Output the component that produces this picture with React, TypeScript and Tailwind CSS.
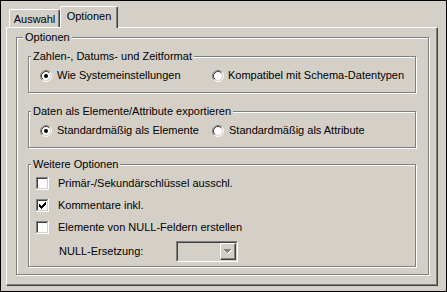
import React from 'react';

function Radio({ checked }: { checked?: boolean }) {
  return (
    <svg width="12" height="12" viewBox="0 0 12 12" className="shrink-0">
      <circle cx="6" cy="6" r="4.5" fill="#fff" />
      <path d="M2.11 9.89 A5.5 5.5 0 0 1 9.89 2.11" fill="none" stroke="#808080" />
      <path d="M9.89 2.11 A5.5 5.5 0 0 1 2.11 9.89" fill="none" stroke="#fff" />
      <path d="M2.82 9.18 A4.5 4.5 0 0 1 9.18 2.82" fill="none" stroke="#404040" />
      <path d="M9.18 2.82 A4.5 4.5 0 0 1 2.82 9.18" fill="none" stroke="#d4d0c8" />
      {checked && <circle cx="6" cy="6" r="2" fill="#000" />}
    </svg>
  );
}

function Checkbox({ checked }: { checked?: boolean }) {
  const cols = [2, 3, 4, 3, 2, 1, 0];
  return (
    <svg width="13" height="13" viewBox="0 0 13 13" shapeRendering="crispEdges" className="shrink-0">
      <rect x="0" y="0" width="13" height="13" fill="#fff" />
      <rect x="0" y="0" width="12" height="1" fill="#808080" />
      <rect x="0" y="0" width="1" height="12" fill="#808080" />
      <rect x="1" y="1" width="10" height="1" fill="#404040" />
      <rect x="1" y="1" width="1" height="10" fill="#404040" />
      <rect x="1" y="11" width="11" height="1" fill="#d4d0c8" />
      <rect x="11" y="1" width="1" height="11" fill="#d4d0c8" />
      {checked &&
        cols.map((s, c) => <rect key={c} x={3 + c} y={3 + s} width="1" height="3" fill="#000" />)}
    </svg>
  );
}

function Group({
  title,
  className,
  labelLeft,
  children,
}: {
  title: string;
  className: string;
  labelLeft: string;
  children?: React.ReactNode;
}) {
  return (
    <div className={`relative border border-[#808080] shadow-[inset_1px_1px_0_#fff,1px_1px_0_#fff] ${className}`}>
      <span className={`absolute top-[-7px] bg-[#d4d0c8] px-[2px] ${labelLeft}`}>{title}</span>
      {children}
    </div>
  );
}

export default function App() {
  return (
    <div className="w-[447px] h-[292px] border border-black bg-[#d4d0c8] pt-[5px] pl-[5px] text-[11px] leading-[13px] text-black font-['Liberation_Sans',Arial,sans-serif]">
      {/* tabs */}
      <div className="flex h-[21px] items-end">
        <div className="ml-[3px] w-[51px] h-[18px] border-l border-t border-r border-l-white border-t-white border-r-[#404040] rounded-t-[2px] shadow-[inset_-1px_0_0_#808080] pt-[3px] text-center">
          Auswahl
        </div>
        <div className="relative z-10 mb-[-1px] w-[58px] h-[22px] bg-[#d4d0c8] border-l border-t border-r border-l-white border-t-white border-r-[#404040] rounded-t-[2px] shadow-[inset_-1px_0_0_#808080] pt-[3px] text-center">
          Optionen
        </div>
      </div>

      {/* panel */}
      <div className="w-[432px] h-[259px] border border-l-white border-t-white border-r-[#404040] border-b-[#404040] shadow-[inset_-1px_-1px_0_#808080] pl-[9px] pt-[9px]">
        <Group title="Optionen" labelLeft="left-[6px]" className="w-[413px] h-[238px] pl-[11px] pt-[18px]">
          <Group title="Zahlen-, Datums- und Zeitformat" labelLeft="left-[2px]" className="w-[388px] h-[37px] pl-[11px] pt-[12px]">
            <div className="flex h-[13px] items-center">
              <div className="flex w-[172px] items-center gap-[5px]">
                <Radio checked />
                <span>Wie Systemeinstellungen</span>
              </div>
              <div className="flex items-center gap-[4px]">
                <Radio />
                <span>Kompatibel mit Schema-Datentypen</span>
              </div>
            </div>
          </Group>

          <Group title="Daten als Elemente/Attribute exportieren" labelLeft="left-[2px]" className="mt-[18px] w-[388px] h-[37px] pl-[11px] pt-[12px]">
            <div className="flex h-[13px] items-center">
              <div className="flex w-[172px] items-center gap-[5px]">
                <Radio checked />
                <span>Standardmäßig als Elemente</span>
              </div>
              <div className="flex items-center gap-[5px]">
                <Radio />
                <span>Standardmäßig als Attribute</span>
              </div>
            </div>
          </Group>

          <Group title="Weitere Optionen" labelLeft="left-[2px]" className="mt-[16px] w-[388px] h-[103px] pl-[7px] pt-[12px]">
            <div className="flex flex-col gap-[9px]">
              <div className="flex h-[13px] items-center gap-[9px]">
                <Checkbox />
                <span>Primär-/Sekundärschlüssel ausschl.</span>
              </div>
              <div className="flex h-[13px] items-center gap-[9px]">
                <Checkbox checked />
                <span>Kommentare inkl.</span>
              </div>
              <div className="flex h-[13px] items-center gap-[9px]">
                <Checkbox />
                <span>Elemente von NULL-Feldern erstellen</span>
              </div>
            </div>
            <div className="mt-[7px] ml-[23px] flex items-center">
              <span className="w-[117px]">NULL-Ersetzung:</span>
              <div className="w-[62px] h-[21px] border border-t-[#808080] border-l-[#808080] border-r-white border-b-white">
                <div className="h-full border border-t-[#404040] border-l-[#404040] border-r-[#d4d0c8] border-b-[#d4d0c8] flex justify-end">
                  <div className="w-[16px] h-full border border-t-white border-l-white border-r-[#404040] border-b-[#404040] shadow-[inset_-1px_-1px_0_#808080] flex items-center justify-center">
                    <svg width="8" height="5" viewBox="0 0 8 5" shapeRendering="crispEdges">
                      <path d="M1 1h7l-3.5 4z" fill="#fff" />
                      <path d="M0 0h7l-3.5 4z" fill="#808080" />
                    </svg>
                  </div>
                </div>
              </div>
            </div>
          </Group>
        </Group>
      </div>
    </div>
  );
}
